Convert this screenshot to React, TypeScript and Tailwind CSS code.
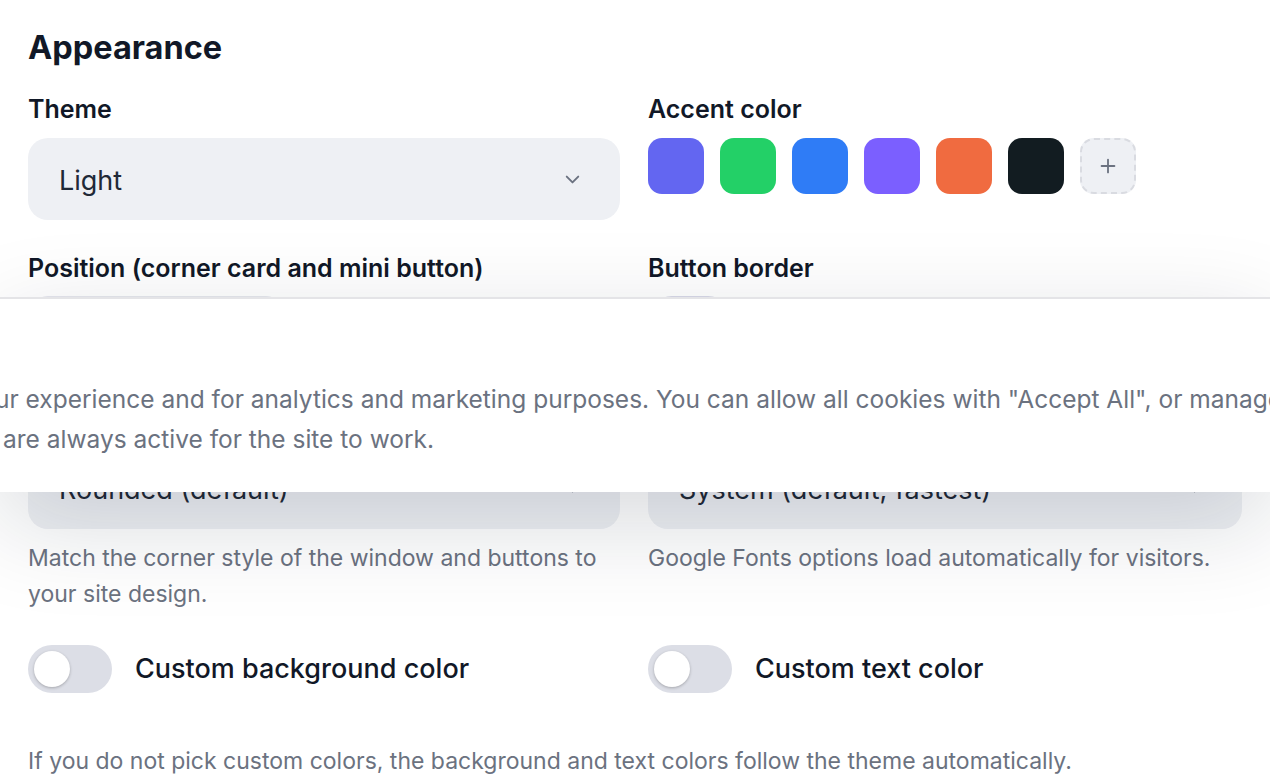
import { ChevronDown, Plus } from 'lucide-react';

const accents = ['#6366f1', '#23d067', '#2f7cf6', '#7b5fff', '#f06b40', '#121c21'];

const Select = ({ value }: { value: string }) => (
  <div className="flex h-[82px] items-center justify-between rounded-[20px] bg-[#eef0f4] pl-[31px] pr-[36px]">
    <span className="pt-[4px] text-[27px] text-[#1f2937]">{value}</span>
    <ChevronDown className="h-[23px] w-[23px] text-[#6b7280]" strokeWidth={2} />
  </div>
);

const Toggle = ({ label }: { label: string }) => (
  <div className="flex items-center gap-[23px]">
    <div className="flex h-[48px] w-[84px] items-center rounded-full bg-[#dcdee6] px-[6px]">
      <div className="h-[36px] w-[36px] rounded-full bg-white shadow-[0_1px_3px_rgba(0,0,0,0.25)]" />
    </div>
    <span className="text-[27px] font-medium text-[#111827]">{label}</span>
  </div>
);

const Label = ({ children }: { children: React.ReactNode }) => (
  <p className="text-[25px] font-semibold leading-[28px] text-[#111827]">{children}</p>
);

const App = () => {
  return (
    <div className="relative h-[784px] overflow-hidden bg-white font-['Inter','Liberation_Sans',sans-serif]">
      <div className="px-[28px] pt-[30px]">
        <h2 className="text-[32.5px] font-bold leading-[36px] text-[#111827]">Appearance</h2>

        {/* -- theme + accent --- */}
        <div className="mt-[29px] grid grid-cols-[592px_1fr] gap-x-[28px]">
          <div>
            <Label>Theme</Label>
            <div className="mt-[15px]">
              <Select value="Light" />
            </div>
          </div>
          <div>
            <Label>Accent color</Label>
            <div className="mt-[15px] flex gap-[16px]">
              {accents.map(c => (
                <button
                  key={c}
                  className="h-[56px] w-[56px] rounded-[14px]"
                  style={{ backgroundColor: c }}
                />
              ))}
              <button className="flex h-[56px] w-[56px] items-center justify-center rounded-[14px] border-2 border-dashed border-[#d9dbe1] bg-[#eef0f4]">
                <Plus className="h-[22px] w-[22px] text-[#6b7280]" strokeWidth={2} />
              </button>
            </div>
          </div>
        </div>

        {/* -- position + border --- */}
        <div className="mt-[34px] grid grid-cols-[592px_1fr] gap-x-[28px]">
          <div>
            <Label>Position (corner card and mini button)</Label>
            <div className="mt-[14px] h-[82px] w-[258px] rounded-[20px] bg-[#e6e7ee]" />
          </div>
          <div>
            <Label>Button border</Label>
            <div className="mt-[14px] h-[48px] w-[84px] rounded-full bg-[#d9d9e8]" />
          </div>
        </div>

        {/* -- corner style + font (labels sit under the banner) --- */}
        <div className="mt-[69px] grid grid-cols-[592px_1fr] gap-x-[28px]">
          <div>
            <Select value="Rounded (default)" />
            <p className="mt-[11px] pr-[10px] text-[23px] leading-[36px] text-[#6b7280]">
              Match the corner style of the window and buttons to your site design.
            </p>
          </div>
          <div>
            <Select value="System (default, fastest)" />
            <p className="mt-[11px] text-[23px] leading-[36px] text-[#6b7280]">
              Google Fonts options load automatically for visitors.
            </p>
          </div>
        </div>

        {/* -- custom colors --- */}
        <div className="mt-[33px] grid grid-cols-[592px_1fr] gap-x-[28px]">
          <Toggle label="Custom background color" />
          <Toggle label="Custom text color" />
        </div>

        <p className="mt-[50px] text-[23px] leading-[36px] text-[#6b7280]">
          If you do not pick custom colors, the background and text colors follow the theme automatically.
        </p>
      </div>

      {/* -- cookie banner overlay --- */}
      <div className="absolute left-0 right-0 top-[297px] z-10 h-[195px] overflow-hidden border-t-2 border-[#e4e4e7] bg-white shadow-[0_30px_100px_rgba(15,23,42,0.16)]">
        <div className="mt-[80px] whitespace-nowrap text-[24.5px] leading-[40px] text-[#6b7280]">
          <p className="-ml-[5px]">
            ur experience and for analytics and marketing purposes. You can allow all cookies with "Accept All", or manage your preferences. Essential cookies
          </p>
          <p className="ml-[3px]">are always active for the site to work.</p>
        </div>
      </div>
    </div>
  );
};

export default App;
